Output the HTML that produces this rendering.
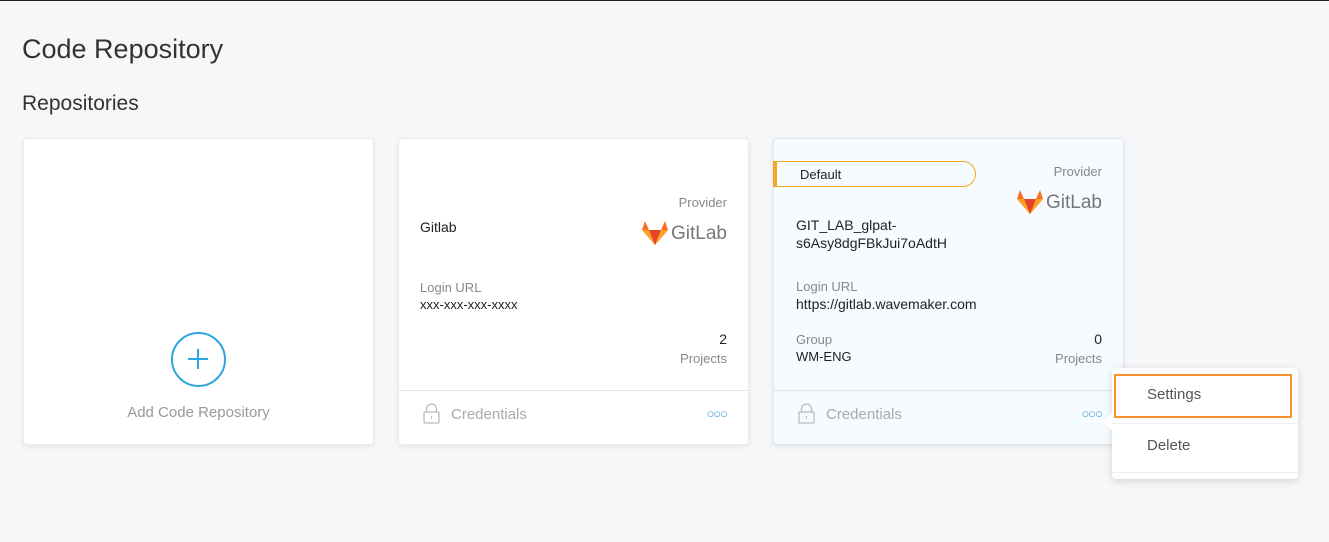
<!DOCTYPE html>
<html><head><style>
*{box-sizing:border-box;margin:0;padding:0}
body{width:1329px;height:542px;background:#f6f7f9;font-family:"Liberation Sans",sans-serif;position:relative;overflow:hidden}
.top{position:absolute;left:0;top:0;width:1329px;height:1px;background:#222}
.abs{position:absolute}
h1{position:absolute;left:22px;top:34px;font-size:27px;font-weight:300;color:#333}
h2{position:absolute;left:22px;top:92px;font-size:21px;font-weight:400;color:#333}
.card{position:absolute;top:138px;width:351px;height:307px;background:#fff;border-radius:4px;box-shadow:0 2px 6px rgba(0,0,0,.08);border:1px solid #ececec}
.t{position:absolute;font-size:14px;color:#222}
.g{position:absolute;font-size:13px;color:#888}
.foot{position:absolute;left:0;right:0;top:251px;border-top:1px solid #e3e6ea}
.cred{position:absolute;left:52px;top:267px;font-size:15px;color:#aaa}
.dots{position:absolute;right:21px;top:267px;font-size:13px;color:#3a9ad9;letter-spacing:-1px}
</style></head><body>
<div class="top"></div>
<h1>Code Repository</h1>
<h2>Repositories</h2>

<div class="card" style="left:23px">
 <div class="abs" style="left:147px;top:193px;width:55px;height:55px;border:2px solid #2ca5e0;border-radius:50%"></div>
 <div class="abs" style="left:173px;top:210px;width:2px;height:20px;background:#2ca5e0"></div>
 <div class="abs" style="left:164px;top:219px;width:20px;height:2px;background:#2ca5e0"></div>
 <div class="abs" style="left:0;width:349px;top:265px;text-align:center;font-size:15px;color:#999">Add Code Repository</div>
</div>

<div class="card" style="left:398px">
 <div class="g" style="right:21px;top:56px">Provider</div>
 <div class="t" style="left:21px;top:80px">Gitlab</div>
 <svg class="abs" style="left:243px;top:82px" width="26" height="24" viewBox="0 0 26 24"><polygon points="13,24 0,9 3,0 7,9 19,9 23,0 26,9" fill="#fc6d26"/><polygon points="13,24 7,9 19,9" fill="#e24329"/><polygon points="0,9 7,9 13,24" fill="#fca326"/><polygon points="26,9 19,9 13,24" fill="#fca326"/></svg>
 <div class="abs" style="left:272px;top:84px;font-size:19px;color:#777">GitLab</div>
 <div class="g" style="left:21px;top:141px">Login URL</div>
 <div class="t" style="left:21px;top:158px;font-size:13px">xxx-xxx-xxx-xxxx</div>
 <div class="t" style="right:21px;top:192px">2</div>
 <div class="g" style="right:21px;top:212px">Projects</div>
 <div class="foot"></div>
 <svg class="abs" style="left:24px;top:264px" width="17" height="21" viewBox="0 0 17 21"><path d="M3.5 9V6a5 5 0 0 1 10 0v3" fill="none" stroke="#bbb" stroke-width="1.3"/><rect x="1" y="9" width="15" height="11" rx="1" fill="none" stroke="#bbb" stroke-width="1.3"/><path d="M8.5 13v3" stroke="#bbb"/></svg>
 <div class="cred">Credentials</div>
 <div class="dots">○○○</div>
</div>

<div class="card" style="left:773px;background:#f5fbfe;border-color:#e0e6ea">
 <div class="abs" style="left:-1px;top:22px;width:203px;height:26px;border:1px solid #f5a623;border-left:4px solid #f5a623;border-radius:0 13px 13px 0;font-size:13px;color:#222;padding:5px 0 0 23px">Default</div>
 <div class="g" style="right:21px;top:25px">Provider</div>
 <svg class="abs" style="left:243px;top:51px" width="26" height="24" viewBox="0 0 26 24"><polygon points="13,24 0,9 3,0 7,9 19,9 23,0 26,9" fill="#fc6d26"/><polygon points="13,24 7,9 19,9" fill="#e24329"/><polygon points="0,9 7,9 13,24" fill="#fca326"/><polygon points="26,9 19,9 13,24" fill="#fca326"/></svg>
 <div class="abs" style="left:272px;top:53px;font-size:19px;color:#777">GitLab</div>
 <div class="t" style="left:22px;top:77px;line-height:18px;font-size:14px">GIT_LAB_glpat-<br>s6Asy8dgFBkJui7oAdtH</div>
 <div class="g" style="left:22px;top:140px">Login URL</div>
 <div class="t" style="left:22px;top:157px">https://gitlab.wavemaker.com</div>
 <div class="g" style="left:22px;top:193px">Group</div>
 <div class="t" style="left:22px;top:210px;font-size:13px">WM-ENG</div>
 <div class="t" style="right:21px;top:192px">0</div>
 <div class="g" style="right:21px;top:212px">Projects</div>
 <div class="foot"></div>
 <svg class="abs" style="left:24px;top:264px" width="17" height="21" viewBox="0 0 17 21"><path d="M3.5 9V6a5 5 0 0 1 10 0v3" fill="none" stroke="#bbb" stroke-width="1.3"/><rect x="1" y="9" width="15" height="11" rx="1" fill="none" stroke="#bbb" stroke-width="1.3"/><path d="M8.5 13v3" stroke="#bbb"/></svg>
 <div class="cred">Credentials</div>
 <div class="dots">○○○</div>
</div>

<div class="abs" style="left:1112px;top:368px;width:186px;height:111px;background:#fff;border-radius:4px;box-shadow:0 2px 8px rgba(0,0,0,.15)">
 <div class="abs" style="left:-6px;top:48px;width:12px;height:12px;background:#fff;transform:rotate(45deg)"></div>
 <div class="abs" style="left:2px;top:6px;width:178px;height:44px;border:2px solid #f7942f"></div>
 <div class="abs" style="left:35px;top:18px;font-size:15px;color:#555">Settings</div>
 <div class="abs" style="left:0;right:0;top:55px;border-top:1px solid #eee"></div>
 <div class="abs" style="left:35px;top:69px;font-size:15px;color:#555">Delete</div>
 <div class="abs" style="left:0;right:0;top:104px;border-top:1px solid #eee"></div>
</div>
</body></html>
